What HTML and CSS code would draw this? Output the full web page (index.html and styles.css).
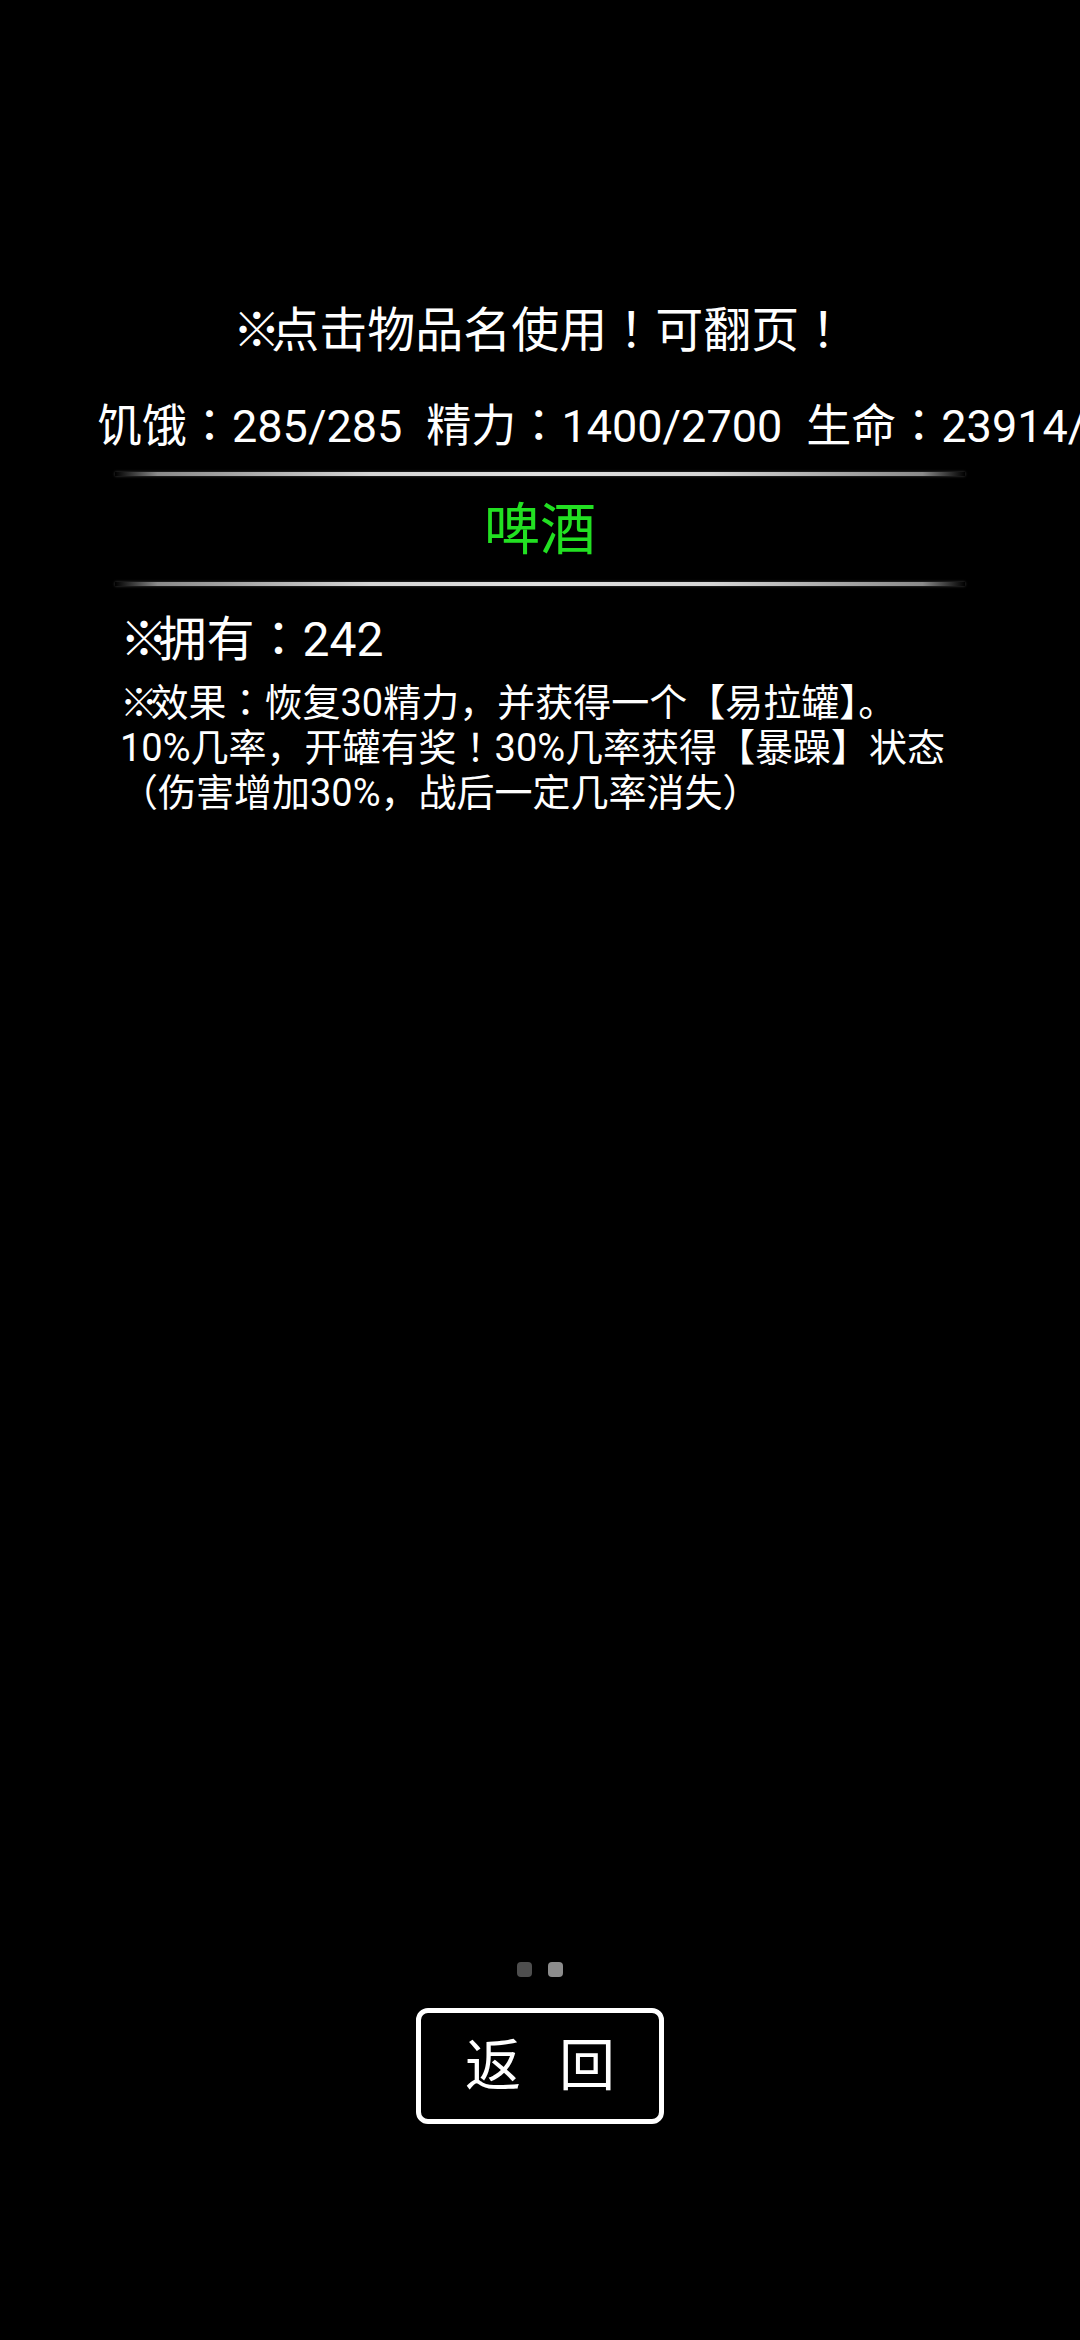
FILE: index.html
```html
<!DOCTYPE html>
<html lang="zh-CN">
<head>
<meta charset="utf-8">
<title>物品</title>
<link rel="stylesheet" href="styles.css">
</head>
<body>
<div class="screen">
  <div class="top">
    <div class="title"><span class="mk">※</span>点击物品名使用<span class="cp" lang="ja">！</span>可翻页<span class="cp" lang="ja">！</span></div>
    <div class="stats">饥饿<span class="cp" lang="ja">：</span>285/285<span class="gap"></span>精力<span class="cp" lang="ja">：</span>1400/2700<span class="gap"></span>生命<span class="cp" lang="ja">：</span>23914/34000</div>
    <div class="divider"></div>
    <div class="item-name">啤酒</div>
    <div class="divider"></div>
    <div class="owned"><span class="mk">※</span>拥有<span class="cp" lang="ja">：</span>242</div>
    <div class="effect"><span class="mk">※</span>效果<span class="cp" lang="ja">：</span>恢复30精力，并获得一个【易拉罐】。<br>10%几率，开罐有奖<span class="cp" lang="ja">！</span>30%几率获得【暴躁】状态<br>（伤害增加30%，战后一定几率消失）</div>
  </div>
  <div class="footer">
    <div class="dots">
      <span class="dot dot-off"></span>
      <span class="dot dot-on"></span>
    </div>
    <div class="back-btn">返 回</div>
  </div>
</div>
</body>
</html>
```
FILE: styles.css
```css
html, body {
  margin: 0;
  padding: 0;
  background: #000;
}
body {
  width: 1080px;
  height: 2340px;
  overflow: hidden;
  color: #fff;
  font-family: Roboto, "Noto Sans CJK SC", sans-serif;
}
.screen {
  display: flex;
  flex-direction: column;
  height: 2340px;
}
.top {
  display: flex;
  flex-direction: column;
  padding-top: 301px;
}
.mk {
  letter-spacing: -0.2em;
}
.cp {
  font-family: Roboto, "Noto Sans CJK JP", sans-serif;
}
.title {
  font-size: 48px;
  line-height: 60px;
  text-align: center;
}
.stats {
  margin-top: 36px;
  padding-left: 97px;
  font-size: 45px;
  line-height: 60px;
  white-space: nowrap;
  overflow: hidden;
}
.gap {
  display: inline-block;
  width: 24px;
}
.divider {
  align-self: center;
  width: 850px;
  height: 4px;
  background: linear-gradient(90deg, rgba(255,255,255,0) 0%, #8a8a8a 5%, #d6d6d6 30%, #e0e0e0 50%, #d6d6d6 70%, #8a8a8a 95%, rgba(255,255,255,0) 100%);
  box-shadow: 0 0 3px rgba(200,200,200,0.35);
}
.stats + .divider {
  margin-top: 15px;
}
.item-name {
  margin-top: 14px;
  height: 80px;
  font-size: 56px;
  line-height: 80px;
  text-align: center;
  color: #22e022;
}
.item-name + .divider {
  margin-top: 12px;
}
.owned {
  margin-top: 24px;
  padding-left: 120px;
  font-size: 48px;
  line-height: 60px;
}
.effect {
  margin-top: 11px;
  padding-left: 120px;
  font-size: 38px;
  line-height: 45px;
}
.footer {
  margin-top: auto;
  padding-bottom: 216px;
  display: flex;
  flex-direction: column;
  align-items: center;
}
.dots {
  display: flex;
  gap: 16px;
  margin-bottom: 31px;
}
.dot {
  width: 15px;
  height: 15px;
  border-radius: 4px;
}
.dot-off {
  background: #4e4e4e;
}
.dot-on {
  background: #8c8c8c;
}
.back-btn {
  box-sizing: border-box;
  width: 248px;
  height: 116px;
  border: 5px solid #fff;
  border-radius: 12px;
  display: flex;
  align-items: center;
  justify-content: center;
  font-size: 56px;
  word-spacing: 24px;
  line-height: 1;
}
```
